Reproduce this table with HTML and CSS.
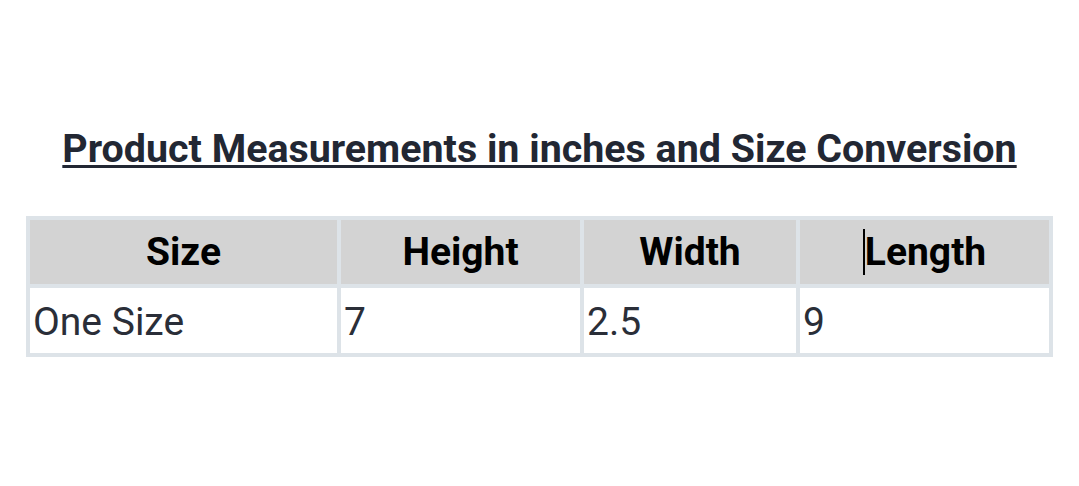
FILE: index.html
```html
<!DOCTYPE html>
<html>
<head>
<meta charset="utf-8">
<link rel="stylesheet" href="styles.css">
</head>
<body>
<div class="page">
  <h2 class="title">Product Measurements in inches and Size Conversion</h2>
  <table class="sizes">
    <thead>
      <tr>
        <th class="c1">Size</th>
        <th class="c2">Height</th>
        <th class="c3">Width</th>
        <th class="c4"><span class="caret"></span>Length</th>
      </tr>
    </thead>
    <tbody>
      <tr>
        <td>One Size</td>
        <td>7</td>
        <td>2.5</td>
        <td>9</td>
      </tr>
    </tbody>
  </table>
</div>
</body>
</html>
```

FILE: styles.css
```css
html, body {
  margin: 0;
  padding: 0;
  background: #ffffff;
}

.page {
  padding: 126px 26px 0 26px;
  font-family: Roboto, "Liberation Sans", sans-serif;
}

.title {
  margin: 0;
  text-align: center;
  font-size: 39.4px;
  line-height: 46px;
  font-weight: 700;
  color: #222733;
  text-decoration: underline;
  text-decoration-thickness: 3px;
  text-underline-offset: 3px;
}

.sizes {
  margin-top: 44px;
  width: 100%;
  border-collapse: collapse;
  border: 4px solid #dde3e8;
  table-layout: fixed;
}

.sizes th,
.sizes td {
  border: 4px solid #dde3e8;
  padding: 0 3px;
}

.sizes th {
  background: #d3d3d3;
  color: #000000;
  font-size: 39px;
  font-weight: 700;
  height: 64px;
  text-align: center;
}

.sizes td {
  color: #2a2e38;
  font-size: 39px;
  font-weight: 400;
  height: 63px;
  padding-top: 2px;
  text-align: left;
}

.c1 { width: 301px; }
.c2 { width: 233px; }
.c3 { width: 206px; }

.caret {
  display: inline-block;
  width: 2px;
  height: 46px;
  background: #000000;
  vertical-align: -10px;
}
```
